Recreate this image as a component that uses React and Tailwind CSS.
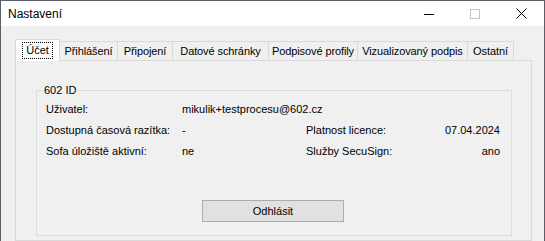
import React from 'react';

const tabs = [
    { label: 'Přihlášení', w: 'w-[59px]' },
    { label: 'Připojení', w: 'w-[56px]' },
    { label: 'Datové schránky', w: 'w-[97px]' },
    { label: 'Podpisové profily', w: 'w-[90px]' },
    { label: 'Vizualizovaný podpis', w: 'w-[111px]' },
    { label: 'Ostatní', w: 'w-[47px]' },
];

const TitleButtons = () => (
    <div className="flex h-full">
        <div className="w-[46px] flex items-center justify-center">
            <svg width="10" height="10" viewBox="0 0 10 10">
                <line x1="0" y1="5.5" x2="10" y2="5.5" stroke="#000" strokeWidth="1" />
            </svg>
        </div>
        <div className="w-[46px] flex items-center justify-center">
            <svg width="10" height="10" viewBox="0 0 10 10">
                <rect x="0.5" y="0.5" width="9" height="9" fill="none" stroke="#c4c4c4" strokeWidth="1" />
            </svg>
        </div>
        <div className="w-[46px] flex items-center justify-center">
            <svg width="11" height="11" viewBox="0 0 11 11">
                <path d="M0.5 0.5 L10.5 10.5 M10.5 0.5 L0.5 10.5" stroke="#000" strokeWidth="1" />
            </svg>
        </div>
    </div>
);

const Row = ({ label, value, rightLabel, rightValue }) => (
    <div className="flex items-center h-[21px]">
        <span className="w-[136px]">{label}</span>
        <span className={rightLabel ? 'w-[124px]' : ''}>{value}</span>
        {rightLabel && <span className="flex-1">{rightLabel}</span>}
        {rightLabel && <span className="text-right">{rightValue}</span>}
    </div>
);

const App = () => {
    return (
        <div className="w-[545px] h-[241px] overflow-hidden bg-[#f0f0f0] border border-b-0 border-[#5b5f68] flex flex-col text-[11px] text-black font-['Liberation_Sans',Arial,sans-serif]">
            {/* title bar */}
            <div className="h-[25px] bg-white flex items-center justify-between shrink-0">
                <span className="pl-[7px] text-[12px]">Nastavení</span>
                <TitleButtons />
            </div>

            <div className="pt-[13px] pl-[14px] flex flex-col flex-1">
                {/* tabs */}
                <div className="flex items-end h-[21px]">
                    <div className="relative z-10 w-[45px] h-[22px] -mb-px bg-white border border-b-0 border-[#d9d9d9] flex items-start justify-center pt-[2px]">
                        <span className="border border-dotted border-black px-[3px] leading-[13px] py-px">Účet</span>
                    </div>
                    {tabs.map(t => (
                        <div
                            key={t.label}
                            className={`${t.w} h-[19px] -ml-px border border-b-0 border-[#d9d9d9] flex items-center justify-center whitespace-nowrap tracking-[-0.1px]`}
                        >
                            {t.label}
                        </div>
                    ))}
                </div>

                {/* tab page */}
                <div className="w-[517px] flex-1 border border-[#d9d9d9] pt-[23px] pl-[20px]">
                    <fieldset className="w-[476px] border border-[#dcdcdc] pl-[9px] pr-[11px] pb-[13px]">
                        <legend className="-ml-[4px] px-[2px] leading-[13px]">602 ID</legend>
                        <div className="pt-[2px]">
                            <Row label="Uživatel:" value="mikulik+testprocesu@602.cz" />
                            <Row label="Dostupná časová razítka:" value="-" rightLabel="Platnost licence:" rightValue="07.04.2024" />
                            <Row label="Sofa úložiště aktivní:" value="ne" rightLabel="Služby SecuSign:" rightValue="ano" />
                        </div>
                        <div className="flex justify-center pt-[38px]">
                            <button className="w-[142px] h-[22px] bg-[#e1e1e1] border border-[#adadad] text-[11px]">
                                Odhlásit
                            </button>
                        </div>
                    </fieldset>
                </div>
            </div>
        </div>
    );
};

export default App;
